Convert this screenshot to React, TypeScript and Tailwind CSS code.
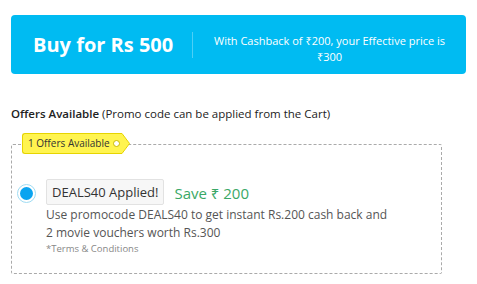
import React from 'react';

const font = { fontFamily: '"Open Sans", "Noto Sans", sans-serif' };

function OfferTag() {
  return (
    <div className="absolute left-[10px] -top-[12px] flex h-[21px] items-center">
      <div className="flex h-full items-center rounded-l-[3px] border border-r-0 border-[#e6d400] bg-[#fff44f] pl-[5px] pr-[2px] text-[10px] text-[#333]">
        1 Offers Available
        <span className="ml-[3px] inline-block h-[7px] w-[7px] rounded-full border border-[#c9b800] bg-white" />
      </div>
      <svg width="9" height="21" viewBox="0 0 9 21" className="-ml-px">
        <path d="M0 0.5 H1 L8.5 10.5 L1 20.5 H0" fill="#fff44f" stroke="#e6d400" strokeWidth="1" />
      </svg>
    </div>
  );
}

export default function App() {
  return (
    <div className="h-[284px] w-[477px] bg-white" style={font}>
      <div className="px-[11px] pt-[15px]">
        <div className="flex h-[59px] items-center rounded-[4px] bg-[#00bbf2] text-white">
          <div className="w-[181px] pl-[22px] text-[20px] font-bold leading-none">Buy for Rs 500</div>
          <div className="h-[26px] w-px bg-white/30" />
          <div className="mt-[8px] flex-1 px-[10px] text-center text-[11px] leading-[16px]">
            With Cashback of ₹200, your Effective price is
            <br />
            ₹300
          </div>
        </div>
      </div>

      <div className="px-[11px] pt-[32px] text-[11.5px] leading-[16px] text-[#222]">
        <span className="font-semibold">Offers Available</span> (Promo code can be applied from the Cart)
      </div>

      <div className="mx-[11px] mt-[22px] w-[431px]">
        <div className="relative h-[130px] rounded-[2px] border border-dashed border-[#aaa]">
          <OfferTag />
          <div className="flex pl-[5px] pt-[34px]">
            <div className="mt-[5px] flex h-[19px] w-[19px] items-center justify-center rounded-full border border-[#9fdcf3] bg-white">
              <div className="h-[13px] w-[13px] rounded-full bg-[#0aa4f0]" />
            </div>
            <div className="ml-[10px]">
              <div className="flex items-center">
                <div className="rounded-[2px] border border-[#e2e2e2] bg-[#f7f7f7] px-[5px] py-[3px] text-[13px] leading-[18px] text-[#333]">
                  DEALS40 Applied!
                </div>
                <div className="ml-[10px] mt-[2px] text-[15px] leading-[20px] text-[#3aa866]">Save ₹ 200</div>
              </div>
              <div className="mt-[1px] text-[12px] leading-[18px] text-[#555]">
                Use promocode DEALS40 to get instant Rs.200 cash back and
                <br />
                2 movie vouchers worth Rs.300
              </div>
              <div className="text-[9.5px] leading-[13px] text-[#888]">*Terms &amp; Conditions</div>
            </div>
          </div>
        </div>
      </div>
    </div>
  );
}
